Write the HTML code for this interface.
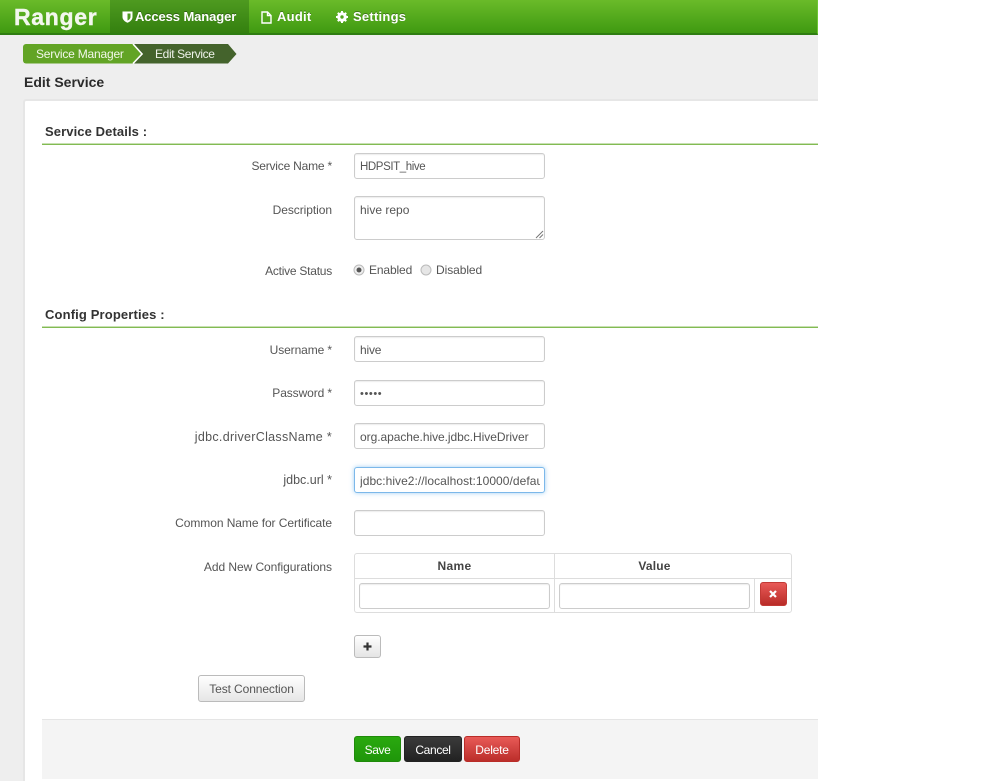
<!DOCTYPE html>
<html><head><meta charset="utf-8"><title>Ranger - Edit Service</title>
<style>
*{box-sizing:border-box}
html,body{margin:0;padding:0;width:999px;height:781px;overflow:hidden;background:#fff;font-family:"Liberation Sans",sans-serif;font-size:12px;color:#555}
.a{position:absolute}
.t{position:absolute;white-space:nowrap;line-height:16px}
.l{position:absolute;white-space:nowrap;line-height:16px;text-align:right;right:667px;color:#555}
.i{position:absolute;left:354px;width:191px;height:26px;background:#fff;border:1px solid #ccc;border-radius:3px;box-shadow:inset 0 1px 1px rgba(0,0,0,.08);padding:0 5px;line-height:26px;white-space:nowrap;overflow:hidden;color:#555}
.b{position:absolute;border-radius:3px;text-align:center;white-space:nowrap}
.h{position:absolute;left:45px;font-weight:bold;font-size:13px;color:#333;line-height:16px;white-space:nowrap}
.n{position:absolute;top:0;height:33px;line-height:33px;color:#fff;font-weight:bold;font-size:13px;white-space:nowrap;letter-spacing:.25px;text-shadow:0 -1px 0 rgba(0,0,0,.3)}
.g{position:absolute;left:42px;width:776px;height:2px;background:linear-gradient(#c8e0b3 50%,#82bb52 50%)}
</style></head><body>
<div class="a" style="left:0;top:0;width:818px;height:781px;background:#eee"></div>
<div class="a" style="left:0;top:0;width:818px;height:35px;background:linear-gradient(#6abb29,#3f9a11);border-bottom:2px solid #2f7d12;border-right:1px solid #6dc534"></div>
<div class="a" style="left:110px;top:0;width:139px;height:33px;background:linear-gradient(#4e9a20,#34800f)"></div>
<div class="t" style="left:14px;top:3px;font-size:23px;line-height:28px;font-weight:bold;color:#f3f7ee;letter-spacing:.7px;-webkit-text-stroke:.4px #f3f7ee">Ranger</div>
<svg class="a" style="left:122px;top:11px" width="11" height="12" viewBox="0 0 11 12"><path d="M.5 .5h10v5.500c0 3-2.800 4.800-5 5.800C3.300 10.800 .5 9 .5 6z" fill="#fff"/><path d="M5.500 2.500h3v3.500c0 1.700-1.500 2.800-3 3.600z" fill="#4e9a20"/></svg>
<div class="n" style="left:135px;letter-spacing:-.1px">Access Manager</div>
<svg class="a" style="left:261px;top:11px" width="11" height="13" viewBox="0 0 11 13"><path d="M1 1h5.500L10 4.500V12H1z M6.500 1v3.500H10" fill="none" stroke="#fff" stroke-width="1.400"/></svg>
<div class="n" style="left:277px">Audit</div>
<svg class="a" style="left:336px;top:11px" width="12" height="12" viewBox="0 0 12 12"><circle cx="6" cy="6" r="3.500" fill="none" stroke="#fff" stroke-width="2.600"/><path d="M6 0v12M0 6h12M1.800 1.800l8.400 8.400M10.200 1.800l-8.400 8.400" stroke="#fff" stroke-width="2"/><circle cx="6" cy="6" r="1.700" fill="#54a51f"/></svg>
<div class="n" style="left:353px">Settings</div>

<svg class="a" style="left:23px;top:44px" width="216" height="20" viewBox="0 0 216 20">
<path d="M3 0H110l9 10-9 9.500H3a3 3 0 0 1-3-3V3a3 3 0 0 1 3-3z" fill="#62a425"/>
<path d="M111 0h94l8.500 10-8.500 9.500h-94l9-9.500z" fill="#44632c"/>
<path d="M110 0l9 10-9 9.500" fill="none" stroke="#fff" stroke-width="1.500"/>
</svg>
<div class="t" style="left:36px;top:46px;color:#f2f7ea;letter-spacing:-.2px">Service Manager</div>
<div class="t" style="left:155px;top:46px;color:#eef2ea;letter-spacing:-.37px">Edit Service</div>
<div class="t" style="left:24px;top:74px;font-size:14px;font-weight:bold;color:#2b2b2b">Edit Service</div>

<div class="a" style="left:23px;top:99px;width:795px;height:682px;background:#fff;border:1px solid #e6e6e6;border-width:2px 0 0 2px;border-radius:3px 0 0 0"></div>

<div class="h" style="top:124px;letter-spacing:.1px">Service Details :</div>
<div class="g" style="top:143px"></div>
<div class="l" style="top:158px;letter-spacing:-.2px">Service Name *</div>
<div class="i" style="top:153px;font-size:11.5px;letter-spacing:-.4px">HDPSIT_hive</div>
<div class="l" style="top:202px;letter-spacing:-.06px">Description</div>
<div class="i" style="top:196px;height:44px">hive repo</div>
<svg class="a" style="left:535px;top:230px" width="9" height="9" viewBox="0 0 9 9"><path d="M1 8l7-7M4.500 8L8 4.500" stroke="#777" stroke-width="1"/></svg>
<div class="l" style="top:263px;letter-spacing:-.24px">Active Status</div>
<svg class="a" style="left:353px;top:264px" width="12" height="12"><circle cx="6" cy="6" r="5" fill="#eee" stroke="#bbb"/><circle cx="6" cy="6" r="2.500" fill="#555"/></svg>
<div class="t" style="left:369px;top:262px;letter-spacing:-.13px">Enabled</div>
<svg class="a" style="left:420px;top:264px" width="12" height="12"><circle cx="6" cy="6" r="5" fill="#e6e6e6" stroke="#bbb"/></svg>
<div class="t" style="left:436px;top:262px;letter-spacing:-.07px">Disabled</div>

<div class="h" style="top:307px;letter-spacing:.14px">Config Properties :</div>
<div class="g" style="top:326px"></div>
<div class="l" style="top:342px;letter-spacing:-.1px">Username *</div>
<div class="i" style="top:336px;letter-spacing:-.2px">hive</div>
<div class="l" style="top:385px;letter-spacing:-.1px">Password *</div>
<div class="i" style="top:380px;letter-spacing:.6px;font-size:11px">•••••</div>
<div class="l" style="top:429px;font-size:12.5px;letter-spacing:.3px">jdbc.driverClassName *</div>
<div class="i" style="top:423px;letter-spacing:-.05px">org.apache.hive.jdbc.HiveDriver</div>
<div class="l" style="top:472px;font-size:12.5px">jdbc.url *</div>
<div class="i" style="top:467px;border-color:#7cb8ea;box-shadow:0 0 5px rgba(82,168,236,.55);letter-spacing:.05px"><span style="display:block;width:180px;overflow:hidden">jdbc:hive2://localhost:10000/default</span></div>
<div class="l" style="top:515px;letter-spacing:-.07px">Common Name for Certificate</div>
<div class="i" style="top:510px"></div>
<div class="l" style="top:559px;letter-spacing:-.06px">Add New Configurations</div>

<div class="a" style="left:354px;top:553px;width:438px;height:60px;border:1px solid #ddd;border-radius:3px"></div>
<div class="a" style="left:354px;top:578px;width:438px;height:1px;background:#ddd"></div>
<div class="a" style="left:554px;top:553px;width:1px;height:60px;background:#ddd"></div>
<div class="a" style="left:754px;top:578px;width:1px;height:35px;background:#ddd"></div>
<div class="t" style="left:355px;width:199px;text-align:center;top:558px;font-weight:bold;color:#444;letter-spacing:.3px">Name</div>
<div class="t" style="left:555px;width:199px;text-align:center;top:558px;font-weight:bold;color:#444;letter-spacing:.2px">Value</div>
<div class="i" style="left:359px;top:583px;width:191px"></div>
<div class="i" style="left:559px;top:583px;width:191px"></div>
<div class="b" style="left:760px;top:582px;width:27px;height:24px;background:linear-gradient(#e85a57,#b92c28);border:1px solid #c23a36"></div>
<svg class="a" style="left:769px;top:590px" width="8" height="8" viewBox="0 0 8 8"><path d="M1 1l6 6M7 1L1 7" stroke="#fff" stroke-width="2.200"/></svg>
<div class="b" style="left:354px;top:635px;width:27px;height:23px;background:linear-gradient(#fff,#e4e4e4);border:1px solid #bbb"></div>
<svg class="a" style="left:363px;top:642px" width="9" height="9" viewBox="0 0 9 9"><path d="M4.500 .5v8M.5 4.500h8" stroke="#333" stroke-width="2.200"/></svg>

<div class="b" style="left:198px;top:675px;width:107px;height:27px;line-height:26px;background:linear-gradient(#fff,#e6e6e6);border:1px solid #bbb;color:#555;letter-spacing:-.1px">Test Connection</div>

<div class="a" style="left:42px;top:719px;width:776px;height:60px;background:#f4f4f4;border-top:1px solid #e5e5e5"></div>
<div class="b" style="left:354px;top:736px;width:47px;height:26px;line-height:26px;background:linear-gradient(#2aa90f,#1f960a);border:1px solid #1f8a0a;color:#fff;letter-spacing:-.4px">Save</div>
<div class="b" style="left:404px;top:736px;width:58px;height:26px;line-height:26px;background:linear-gradient(#3b3b3b,#222);border:1px solid #222;color:#fff;letter-spacing:-.35px">Cancel</div>
<div class="b" style="left:464px;top:736px;width:56px;height:26px;line-height:26px;background:linear-gradient(#e85a57,#bb2e2a);border:1px solid #b92c28;color:#fff;letter-spacing:-.2px">Delete</div>
</body></html>
